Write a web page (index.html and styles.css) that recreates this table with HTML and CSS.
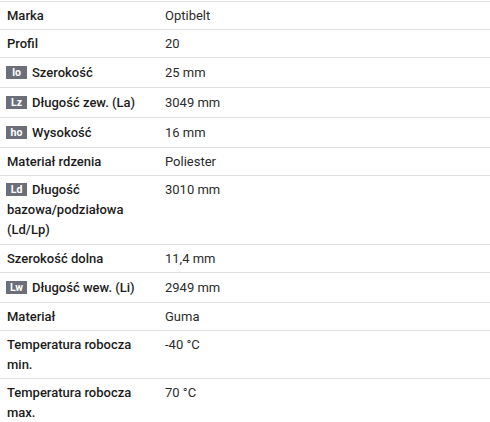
FILE: index.html
```html
<!DOCTYPE html>
<html lang="pl">
<head>
<meta charset="utf-8">
<link rel="stylesheet" href="styles.css">
</head>
<body>
<div class="wrap">
<table class="specs">
  <tr><th>Marka</th><td>Optibelt</td></tr>
  <tr><th>Profil</th><td>20</td></tr>
  <tr class="ic"><th><span class="badge">lo</span>Szerokość</th><td>25 mm</td></tr>
  <tr class="ic"><th><span class="badge">Lz</span>Długość zew. (La)</th><td>3049 mm</td></tr>
  <tr class="ic"><th><span class="badge">ho</span>Wysokość</th><td>16 mm</td></tr>
  <tr><th>Materiał rdzenia</th><td>Poliester</td></tr>
  <tr class="multi"><th><span class="badge">Ld</span>Długość bazowa/podziałowa (Ld/Lp)</th><td>3010 mm</td></tr>
  <tr><th>Szerokość dolna</th><td>11,4 mm</td></tr>
  <tr class="ic"><th><span class="badge">Lw</span>Długość wew. (Li)</th><td>2949 mm</td></tr>
  <tr><th>Materiał</th><td>Guma</td></tr>
  <tr><th>Temperatura robocza min.</th><td>-40 °C</td></tr>
  <tr><th>Temperatura robocza max.</th><td>70 °C</td></tr>
</table>
</div>
</body>
</html>
```

FILE: styles.css
```css
html, body {
  margin: 0;
  padding: 0;
  background: #fff;
}
.wrap {
  padding-top: 1px;
}
.specs {
  width: 100%;
  border-collapse: collapse;
  font-family: Roboto, "Liberation Sans", sans-serif;
  font-size: 13px;
  line-height: 20px;
  color: #1f1f1f;
}
.specs tr {
  border-top: 1px solid #e0e0e0;
}
.specs th, .specs td {
  text-align: left;
  vertical-align: top;
  padding: 4px 7px 3px 7px;
}
.specs th {
  width: 144px;
  font-weight: 500;
  color: #1c1c1c;
}
.specs td {
  font-weight: 400;
  color: #2b2b2b;
}
.specs tr.ic th, .specs tr.ic td {
  padding-top: 5px;
  padding-bottom: 4px;
}
.specs tr.multi th, .specs tr.multi td {
  padding-bottom: 4px;
}
.badge {
  display: inline-block;
  width: 21px;
  height: 13px;
  line-height: 13px;
  margin: 3px 5px 0 -1px;
  background: #6c6f7a;
  color: #fff;
  font-size: 10.5px;
  font-weight: 700;
  text-align: center;
  vertical-align: top;
}
```
